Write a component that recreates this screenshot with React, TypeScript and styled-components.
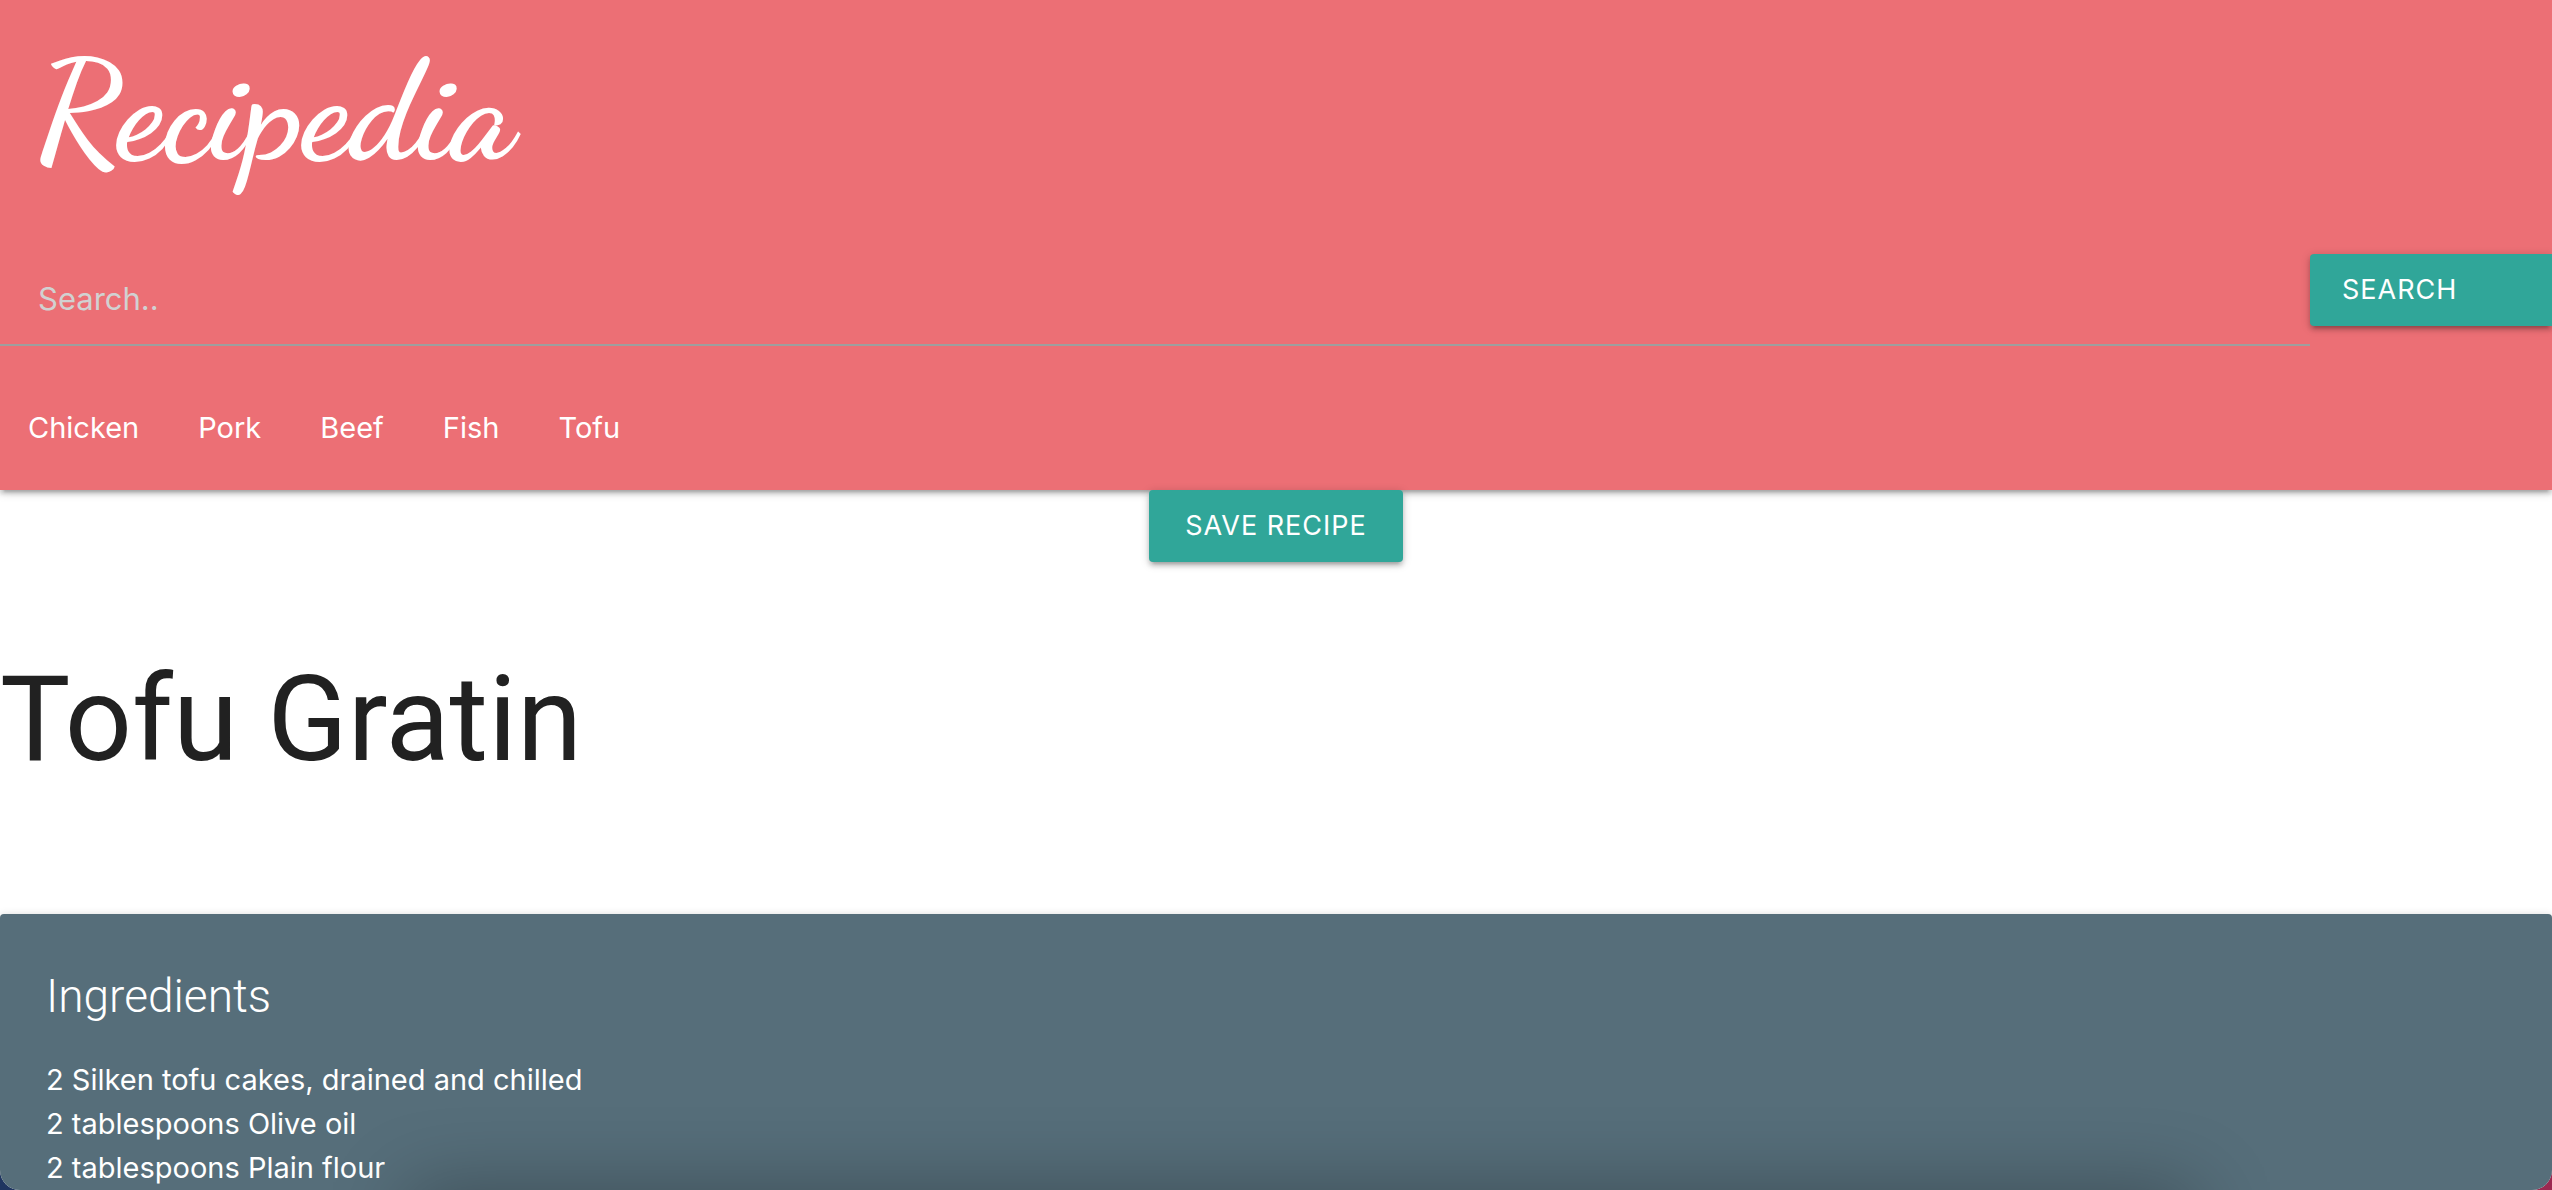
import React from "react";
import styled, { createGlobalStyle } from "styled-components";

const Global = createGlobalStyle`
  *, *::before, *::after { box-sizing: border-box; }
  html, body { margin: 0; height: 100%; overflow: hidden; }
  body {
    background: linear-gradient(90deg, #1f3560 50%, #9b2950 50%);
    font-family: Inter, "Liberation Sans", sans-serif;
    font-size: 29px;
    line-height: 44px;
    color: #212121;
  }
`;

const Page = styled.div`
  height: 100vh;
  overflow: hidden;
  background: #fff;
  border-radius: 0 0 20px 20px;
`;

const Header = styled.header`
  display: flex;
  flex-direction: column;
  padding-bottom: 40px;
  background: #ec6f75;
  color: #fff;
  box-shadow: 0 4px 4px rgba(0, 0, 0, 0.14), 0 6px 2px -4px rgba(0, 0, 0, 0.12), 0 2px 10px rgba(0, 0, 0, 0.2);
`;

const Logo = styled.a`
  align-self: flex-start;
  padding: 22px 36px 0;
  font-family: "Dancing Script", cursive;
  font-size: 139px;
  font-weight: 700;
  line-height: 180px;
  color: inherit;
  text-decoration: none;
`;

const SearchForm = styled.form`
  display: flex;
  align-items: flex-start;
  margin-top: 52px;
`;

const SearchField = styled.input`
  flex: 1;
  min-width: 0;
  height: 92px;
  padding: 0 38px 2px;
  border: 0;
  border-bottom: 2px solid #9e9e9e;
  background: transparent;
  color: #fff;
  font: inherit;
  font-size: 31px;
  outline: 0;
  &::placeholder { color: #d1d1d1; opacity: 1; }
`;

const Button = styled.button`
  height: 72px;
  padding: 0 36px;
  border: 0;
  border-radius: 4px;
  background: #30a699;
  color: #fff;
  font: inherit;
  font-size: 27px;
  letter-spacing: 1px;
  text-transform: uppercase;
  box-shadow: 0 4px 4px rgba(0, 0, 0, 0.14), 0 6px 2px -4px rgba(0, 0, 0, 0.12), 0 2px 10px rgba(0, 0, 0, 0.2);
`;

const SearchButton = styled(Button)`
  width: 242px;
  padding: 0 32px;
  border-radius: 4px 0 0 4px;
  text-align: left;
`;

const Categories = styled.nav`
  display: flex;
  gap: 59px;
  padding: 60px 28px 0;
`;

const Category = styled.a`
  color: inherit;
  text-decoration: none;
`;

const Actions = styled.div`
  display: flex;
  justify-content: center;
`;

const Title = styled.h1`
  margin: 90px 0 126px;
  font-family: Roboto, "Liberation Sans", sans-serif;
  font-size: 118px;
  font-weight: 400;
  line-height: 136px;
`;

const Card = styled.section`
  min-height: 320px;
  padding: 50px 46px;
  border-radius: 4px;
  background: #566e7a;
  color: #fff;
  box-shadow: 0 4px 4px rgba(0, 0, 0, 0.14), 0 2px 10px rgba(0, 0, 0, 0.2);
`;

const CardTitle = styled.h2`
  margin: 0 0 30px;
  font-family: Roboto, "Liberation Sans", sans-serif;
  font-size: 46px;
  font-weight: 300;
  line-height: 64px;
`;

const List = styled.ul`
  margin: 0;
  padding: 0;
  list-style: none;
`;

const DockShade = styled.div`
  position: fixed;
  top: 100%;
  left: 16%;
  right: 14%;
  height: 80px;
  box-shadow: 0 0 80px 0 rgba(0, 0, 0, 0.3);
  pointer-events: none;
`;

const categories = ["Chicken", "Pork", "Beef", "Fish", "Tofu"];
const ingredients = [
  "2 Silken tofu cakes, drained and chilled",
  "2 tablespoons Olive oil",
  "2 tablespoons Plain flour",
];

export default function App() {
  return (
    <Page>
      <Global />
      <Header>
        <Logo href="#">Recipedia</Logo>
        <SearchForm onSubmit={(e: React.FormEvent) => e.preventDefault()}>
          <SearchField type="text" aria-label="Search" placeholder="Search.." />
          <SearchButton type="submit">Search</SearchButton>
        </SearchForm>
        <Categories>
          {categories.map((name) => (
            <Category key={name} href="#">{name}</Category>
          ))}
        </Categories>
      </Header>
      <main>
        <Actions>
          <Button type="button">Save recipe</Button>
        </Actions>
        <Title>Tofu Gratin</Title>
        <Card>
          <CardTitle>Ingredients</CardTitle>
          <List>
            {ingredients.map((item) => (
              <li key={item}>{item}</li>
            ))}
          </List>
        </Card>
      </main>
      <DockShade />
    </Page>
  );
}
